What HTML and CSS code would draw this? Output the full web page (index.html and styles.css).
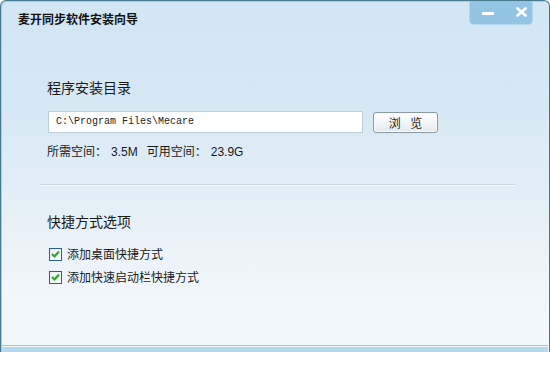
FILE: index.html
```html
<!DOCTYPE html>
<html lang="zh-CN">
<head>
<meta charset="utf-8">
<title>麦开同步软件安装向导</title>
<link rel="stylesheet" href="styles.css">
</head>
<body>
<div class="window">
  <div class="titlebar">
    <div class="title">麦开同步软件安装向导</div>
    <div class="controls">
      <span class="ctl ctl-min"><svg width="12" height="3" viewBox="0 0 12 3"><rect width="12" height="3" fill="#fff"/></svg></span>
      <span class="ctl ctl-close"><svg width="11" height="10" viewBox="0 0 11 10"><path d="M1.5 1.5 L9.5 8.5 M9.5 1.5 L1.5 8.5" stroke="#fff" stroke-width="2.6" stroke-linecap="square"/></svg></span>
    </div>
  </div>
  <div class="content">
    <div class="heading h1">程序安装目录</div>
    <div class="path-row">
      <div class="path-input">C:\Program Files\Mecare</div>
      <div class="browse">浏 览</div>
    </div>
    <div class="space-info">
      <span class="cjk">所需空间：</span><span class="num">3.5M</span><span class="cjk gap">可用空间：</span><span class="num">23.9G</span>
    </div>
    <div class="separator"></div>
    <div class="heading h2">快捷方式选项</div>
    <div class="check-row first">
      <span class="checkbox"><svg width="9" height="8" viewBox="0 0 9 8"><path d="M1 4 L3.5 6.5 L8 1.5" fill="none" stroke="#2aa52a" stroke-width="2"/></svg></span>
      <span class="label">添加桌面快捷方式</span>
    </div>
    <div class="check-row">
      <span class="checkbox"><svg width="9" height="8" viewBox="0 0 9 8"><path d="M1 4 L3.5 6.5 L8 1.5" fill="none" stroke="#2aa52a" stroke-width="2"/></svg></span>
      <span class="label">添加快速启动栏快捷方式</span>
    </div>
  </div>
  <div class="footer">
    <div class="footer-line"></div>
    <div class="footer-strip"></div>
  </div>
</div>
</body>
</html>
```
FILE: styles.css
```css
html, body {
  margin: 0;
  padding: 0;
  background: #ffffff;
}
body {
  font-family: "Noto Sans CJK SC", "Liberation Sans", sans-serif;
  color: #1a1a1a;
}
.window {
  width: 550px;
  height: 352px;
  box-sizing: border-box;
  border: 1px solid #477a8f;
  border-bottom: none;
  border-radius: 6px 6px 0 0;
  background: linear-gradient(to bottom, #d2e6f3 0%, #d6e8f4 30%, #e6f0f7 60%, #f2f7fb 85%, #f3f8fb 100%);
  box-shadow: inset 1px 1px 0 #a9cde2;
  display: flex;
  flex-direction: column;
}
.titlebar {
  height: 24px;
  display: flex;
  justify-content: space-between;
  align-items: flex-start;
  flex-shrink: 0;
}
.title {
  margin: 10px 0 0 17px;
  font-size: 12px;
  line-height: 16px;
  font-weight: bold;
  color: #111;
}
.controls {
  margin-right: 16px;
  width: 64px;
  height: 24px;
  background: #94c4e4;
  border: 1px solid #b4d6ec;
  border-top: none;
  box-sizing: border-box;
  border-radius: 0 0 5px 5px;
  display: flex;
  align-items: flex-start;
}
.ctl {
  display: flex;
  justify-content: center;
}
.ctl svg { display: block; }
.ctl-min {
  width: 32px;
  margin-top: 11px;
  padding-left: 3px;
  box-sizing: border-box;
}
.ctl-close {
  width: 30px;
  margin-top: 6px;
  padding-left: 8px;
  box-sizing: border-box;
}
.content {
  flex: 1;
  padding-left: 46px;
}
.heading {
  font-size: 14px;
  line-height: 20px;
  color: #1a1a1a;
}
.h1 { margin-top: 52px; }
.path-row {
  margin-top: 14px;
  display: flex;
  align-items: flex-start;
}
.path-input {
  width: 315px;
  height: 22px;
  box-sizing: border-box;
  margin-left: 1px;
  background: #fff;
  border: 1px solid #bccfdd;
  font-family: "Liberation Mono", monospace;
  font-size: 10px;
  line-height: 20px;
  padding-left: 7px;
  color: #222;
}
.browse {
  margin-left: 10px;
  margin-top: 1px;
  width: 65px;
  height: 21px;
  box-sizing: border-box;
  border: 1px solid #8c9aa6;
  border-radius: 3px;
  background: linear-gradient(to bottom, #ffffff 0%, #f4f6f8 50%, #e3e8ec 100%);
  box-shadow: inset 0 0 0 1px #fbfcfd;
  font-size: 12px;
  line-height: 19px;
  text-align: center;
  word-spacing: 7px;
  color: #1a1a1a;
}
.space-info {
  margin-top: 10px;
  font-size: 12px;
  line-height: 16px;
  display: flex;
  align-items: baseline;
}
.num {
  font-family: "Liberation Sans", sans-serif;
  margin-left: 4px;
}
.gap { margin-left: 9px; }
.separator {
  margin-top: 24px;
  margin-left: -8px;
  width: 476px;
  height: 1px;
  background: #c6d5df;
  border-bottom: 1px solid #ffffff;
}
.h2 { margin-top: 25px; }
.check-row {
  display: flex;
  align-items: center;
  height: 20px;
  margin-top: 3px;
  font-size: 12px;
}
.check-row.first { margin-top: 13px; }
.checkbox {
  width: 13px;
  height: 13px;
  box-sizing: border-box;
  margin-left: 2px;
  border: 1px solid #2a5f8c;
  background: linear-gradient(135deg, #e8eef3 0%, #ffffff 100%);
  display: flex;
  align-items: center;
  justify-content: center;
}
.checkbox svg { display: block; }
.label {
  margin-left: 5px;
  line-height: 20px;
}
.footer {
  flex-shrink: 0;
  margin: 0 1px 0 1px;
}
.footer-line {
  height: 1px;
  background: #b4bfc7;
}
.footer-strip {
  margin-top: 1px;
  height: 5px;
  background: #b4d8ee;
}
```
